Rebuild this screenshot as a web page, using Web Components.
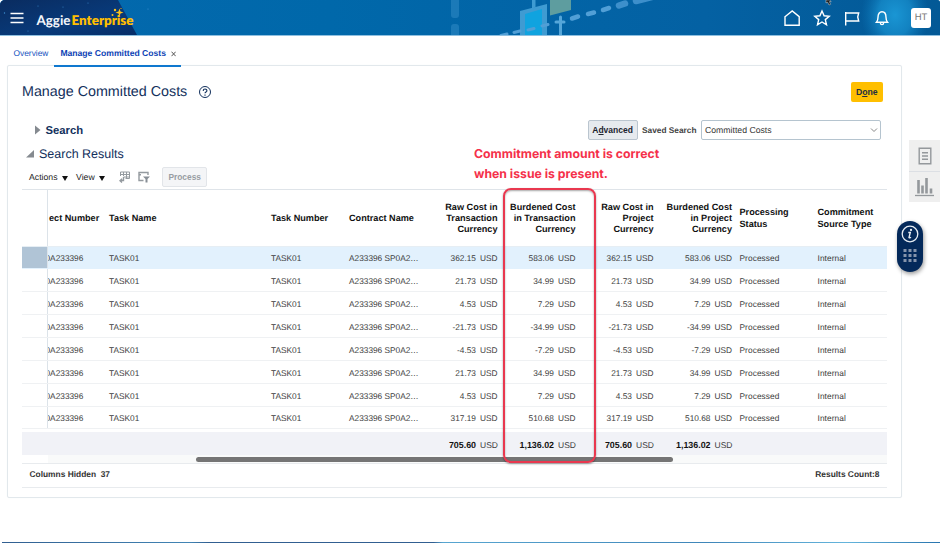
<!DOCTYPE html>
<html lang="en">
<head>
<meta charset="utf-8">
<title>Manage Committed Costs</title>
<style>
    html, body {
        margin: 0;
        height: 546px;
        overflow: hidden;
        background: #fff;
    }

    body {
        font-family: "Liberation Sans", Arial, sans-serif;
        font-size: 8.3px;
        color: #333;
        text-rendering: geometricPrecision;
    }
</style>
</head>
<body>
<erp-app></erp-app>

<script>
class BaseElement extends HTMLElement {
    constructor () {
        super();
        const template = document.createElement('template');
        template.innerHTML = this.markup();
        this._shadowRoot = this.attachShadow({ mode: 'open' });
        this._shadowRoot.appendChild(template.content.cloneNode(true));
    }
}

class AppHeader extends BaseElement {
    markup () {
        return `
<style>
    :host {
        display: block;
        position: relative;
        height: 35px;
        border-bottom: 1px solid #8fc0e0;
        border-radius: 5px 3px 0 0;
        overflow: hidden;
        background: #0267ab;
    }

    .art {
        position: absolute;
        inset: 0;
        display: block;
    }

    .bar {
        position: relative;
        display: flex;
        align-items: center;
        height: 35px;
        padding: 0 9px 0 10px;
        box-sizing: border-box;
    }

    .brand {
        margin: 5px 0 0 12.500px;
        font: 700 13.400px/16px Lato, sans-serif;
        color: #f4f7fb;
        white-space: nowrap;
    }

    .brand b {
        margin-left: 1px;
        color: #ffbf00;
        font-weight: 800;
    }

    .icons {
        display: flex;
        align-items: center;
        gap: 12px;
        margin-left: auto;
        padding-top: 1px;
    }

    .avatar {
        width: 20px;
        height: 20px;
        margin-left: 8px;
        border-radius: 3px;
        background: #fff;
        color: #777;
        font-size: 9.5px;
        line-height: 20px;
        text-align: center;
    }
</style>
<svg class="art" width="940" height="35">
    <defs>
        <linearGradient id="sky" x1="0" x2="1" y1="0" y2="0">
            <stop offset="0" stop-color="#0469ae"/>
            <stop offset=".35" stop-color="#0068aa"/>
            <stop offset=".75" stop-color="#0461a3"/>
            <stop offset="1" stop-color="#035996"/>
        </linearGradient>
        <linearGradient id="night" x1="0" x2="1" y1="0" y2="1">
            <stop offset="0" stop-color="#0a2c60"/>
            <stop offset=".6" stop-color="#083a7a"/>
            <stop offset="1" stop-color="#062d68"/>
        </linearGradient>
        <radialGradient id="glow">
            <stop offset="0" stop-color="#1a96d4"/>
            <stop offset=".5" stop-color="#178fce" stop-opacity=".75"/>
            <stop offset="1" stop-color="#0b78ba" stop-opacity="0"/>
        </radialGradient>
    </defs>
    <rect width="940" height="35" fill="url(#sky)"/>
    <path d="M0 0H118L137 35H0z" fill="url(#night)"/>
    <g fill="#3d8fd1">
        <circle cx="4.500" cy="13" r=".7"/><circle cx="38" cy="6" r=".5"/><circle cx="63" cy="7" r=".5"/>
        <circle cx="88" cy="3" r=".5"/><circle cx="28" cy="31" r=".5"/><circle cx="148" cy="9" r=".6"/>
    </g>
    <ellipse cx="895" cy="15" rx="34" ry="42" fill="url(#glow)"/>
    <g fill="#4ba0d8" opacity=".35">
        <rect x="451" y="-4" width="8" height="22" rx="3"/>
        <rect x="451" y="24" width="8" height="14" rx="3"/>
    </g>
    <path d="M520 11L547 4V35H520z" fill="#3f9bd2"/>
    <path d="M525 14L542 9V35H525z" fill="#10a3df"/>
    <path d="M532 0h3.500v7.500l-3.500 1z" fill="#3f9bd2"/>
    <path d="M550 0H571V10L550 15.500z" fill="#5e9d9f"/>
    <path d="M560.500 17V35M556 22h8" stroke="#55a6d9" stroke-width="3" stroke-linecap="round"/>
    <path d="M501 35.500l6-1.500M514 32.500l6-1.500M528 30l6-1.500M542 26l6-1.500" stroke="#519fd6" stroke-width="3" stroke-linecap="round"/>
    <path d="M572 18.500l6-2M588 14l6-1.500M603 10l6-2" stroke="#519fd6" stroke-width="4.500" stroke-linecap="round"/>
    <path d="M619 5.500l6-2M636 1l20-5" stroke="#3d8fcb" stroke-width="6.500" stroke-linecap="round"/>
    <g fill="#ffc21a">
        <path d="M119.500 8.500l1 3 3 1-3 1-1 3-1-3-3-1 3-1z"/>
        <circle cx="115" cy="10" r="1.200"/><circle cx="112.500" cy="15" r="1"/><circle cx="121" cy="8.500" r=".6"/>
    </g>
    <path d="M826 0v3l1.600-1 1.400 3 1.600-.700-1.300-2.700h2L829.500 0z" fill="#111" stroke="#ddd" stroke-width=".5"/>
</svg>
<div class="bar">
    <svg width="14" height="12" stroke="#fff" stroke-width="1.500"><path d="M.5 1.500h13M.5 6h13M.5 10.500h13"/></svg>
    <div class="brand">Aggie<b>Enterprise</b></div>
    <div class="icons">
        <svg width="18" height="18" fill="none" stroke="#fff" stroke-width="1.400"><path d="M2 7.700L9.200 2l7 5.700V16.200H2z"/></svg>
        <svg width="18" height="18" fill="none" stroke="#fff" stroke-width="1.400"><path d="M9 2l2.100 4.800 5.100.400-3.900 3.400 1.200 5.200L9 13l-4.500 2.800 1.200-5.200L1.800 7.200l5.100-.400z"/></svg>
        <svg width="18" height="18" fill="none" stroke="#fff" stroke-width="1.400"><path d="M2.700 16.500V3M2.700 4h13l-1 4 1 4h-13"/></svg>
        <svg width="18" height="18" fill="none" stroke="#fff" stroke-width="1.400"><path d="M3.500 13.300c1.200-1.300 1.500-2.600 1.500-5C5 4.800 6.600 2.800 9 2.800s4 2 4 5.500c0 2.400.3 3.700 1.500 5zM7.300 13.700c.2 2.500 3.200 2.500 3.400 0"/></svg>
        <div class="avatar">HT</div>
    </div>
</div>`;
    }
}

class PageTabs extends BaseElement {
    markup () {
        return `
<style>
    :host {
        display: flex;
        height: 29px;
        padding-left: 13.500px;
        line-height: 35px;
        color: #1553c0;
        font-size: 8.400px;
        white-space: nowrap;
    }

    .active {
        position: relative;
        z-index: 1;
        display: flex;
        gap: 5.500px;
        height: 28.500px;
        margin-left: 6px;
        padding: 0 5px 0 6px;
        border-bottom: 2px solid #0f78cf;
        color: #0d43b5;
        font-size: 8.600px;
        font-weight: 700;
    }

    svg {
        margin-top: 14.500px;
    }
</style>
<span>Overview</span>
<div class="active"><span>Manage Committed Costs</span><svg width="5" height="6" stroke="#555" stroke-width="1"><path d="M.5.7l4.200 4.500M4.700.7L.5 5.200"/></svg></div>`;
    }
}

class SearchBar extends BaseElement {
    markup () {
        return `
<style>
    :host {
        display: flex;
        align-items: center;
        height: 24px;
        padding: 0 6px 0 13px;
        white-space: nowrap;
    }

    h2 {
        margin: 1px 0 0 4.500px;
        font-size: 11.300px;
        color: #12305c;
    }

    button {
        box-sizing: border-box;
        width: 50px;
        height: 20px;
        margin-left: auto;
        padding: 0;
        border: 1px solid #bac5cf;
        border-radius: 2px;
        background: #e6eaee;
        font: 700 8.500px "Liberation Sans", sans-serif;
        color: #1b2430;
    }

    label {
        margin: 0 4.500px 0 4.500px;
        font-weight: 700;
        color: #444;
    }

    .select {
        display: flex;
        align-items: center;
        justify-content: space-between;
        box-sizing: border-box;
        width: 180px;
        height: 20px;
        padding: 0 2px 0 3px;
        border: 1px solid #b5c4cf;
        border-radius: 2px;
        font-size: 8.700px;
        color: #333;
    }
</style>
<svg width="6" height="10"><path d="M0 .5L5.500 5L0 9.500z" fill="#858a90"/></svg>
<h2>Search</h2>
<button>A<u>d</u>vanced</button>
<label>Saved Search</label>
<div class="select"><span>Committed Costs</span><svg width="8" height="6" fill="none" stroke="#888"><path d="M1 1.500l3 3 3-3"/></svg></div>`;
    }
}

class ResultsToolbar extends BaseElement {
    markup () {
        return `
<style>
    :host {
        display: flex;
        align-items: center;
        height: 24px;
        padding-left: 7px;
        font-size: 8.700px;
        color: #222;
        white-space: nowrap;
    }

    .arrow {
        margin: 2px 8px 0 4.500px;
    }

    .icon {
        margin-right: 8px;
    }

    button {
        box-sizing: border-box;
        width: 45px;
        height: 20px;
        margin-left: 4px;
        padding: 0;
        border: 1px solid #e2e5e9;
        border-radius: 2px;
        background: #f4f5f7;
        font: 700 8.400px "Liberation Sans", sans-serif;
        color: #989da3;
    }
</style>
<span>Actions</span>
<svg class="arrow" width="6" height="5"><path d="M0 0h6L3 5z" fill="#111"/></svg>
<span>View</span>
<svg class="arrow" width="6" height="5"><path d="M0 0h6L3 5z" fill="#111"/></svg>
<svg class="icon" style="margin-left:6px" width="11" height="12" fill="none" stroke="#949a9f">
    <path d="M1.500 5V1h9v6.500h-4M1.500 3.500h9M4.500 1v4M7.500 1v6.500M4.500 6h6"/><path d="M4.500 6v3.500H1.500M3 7.800L1 9.700l2 1.800" stroke-width="1.400"/>
</svg>
<svg class="icon" width="12" height="12" fill="none" stroke="#949a9f" stroke-width="1.400">
    <path d="M5.500 9.500H1V1.500h9V4M1 3.800h2"/><path d="M5 5.500h7L9.500 8v3.500h-2V8z" fill="#878e95" stroke="none"/>
</svg>
<button>Process</button>`;
    }
}

class ResultsTable extends BaseElement {
    markup () {
        const amounts = [
            ['362.15', '583.06'],
            ['21.73', '34.99'],
            ['4.53', '7.29'],
            ['-21.73', '-34.99'],
            ['-4.53', '-7.29'],
            ['21.73', '34.99'],
            ['4.53', '7.29'],
            ['317.19', '510.68']
        ];
        const cost = value => `<span class="num">${value}<i>USD</i></span>`;
        const rows = amounts.map(([raw, burdened], index) => `
<div class="row${index === 0 ? ' selected' : ''}">
    <span class="frozen"></span><span class="clip">0A233396</span><span>TASK01</span><span>TASK01</span>
    <span>A233396 SP0A2…</span>${cost(raw)}${cost(burdened)}${cost(raw)}${cost(burdened)}
    <span class="status">Processed</span><span class="status">Internal</span>
</div>`).join('');

        return `
<style>
    :host {
        display: block;
        border-top: 1px solid #dfe4e9;
        font-size: 8.300px;
        color: #3c3c3c;
    }

    .row {
        display: grid;
        grid-template-columns: 26px 57px 162px 78px 78px 78px 78px 78px 78.500px 78px 73.500px;
        align-items: center;
        box-sizing: border-box;
        height: 22.860px;
        border-bottom: 1px solid #eff1f3;
        white-space: nowrap;
    }

    .row > span {
        padding: 2px 4px 0;
    }

    .row > .frozen {
        align-self: stretch;
        padding: 0;
        border-right: 1px solid #dce3e9;
        background: #fff;
    }

    .row > .clip {
        padding: 2px 0 0;
        overflow: hidden;
        text-indent: -2.500px;
    }

    .row > .num {
        padding-right: 3.500px;
        text-align: right;
    }

    i {
        margin-left: 4px;
        font-style: normal;
    }

    .status {
        letter-spacing: .08px;
    }

    .head {
        height: 56.500px;
        border-bottom-color: #e6eef4;
        font-size: 9.150px;
        font-weight: 700;
        line-height: 11.300px;
        color: #111;
    }

    .head > .clip {
        text-indent: 1px;
    }

    .selected {
        background: #e2f1fd;
        border-bottom-color: #e2f1fd;
    }

    .row.selected > .frozen {
        background: #b0c4d6;
    }

    .totals {
        height: 22.500px;
        margin-top: 3px;
        border: 0;
        background: #f1f2f7;
        font-size: 8.500px;
    }

    .totals > .num {
        padding-right: 3px;
    }

    .totals b {
        color: #111;
        font-size: 8.900px;
    }

    .track {
        box-sizing: border-box;
        height: 8px;
        margin-left: 26px;
        padding: 1px 0 0 147.500px;
        display: flex;
        align-items: center;
        background: #f9fafa;
    }

    .thumb {
        width: 477.500px;
        height: 4.500px;
        border-radius: 3px;
        background: #757575;
    }
</style>
<div class="row head">
    <span class="frozen"></span><span class="clip">ect Number</span><span>Task Name</span><span>Task Number</span>
    <span>Contract Name</span><span class="num">Raw Cost in<br>Transaction<br>Currency</span>
    <span class="num">Burdened Cost<br>in Transaction<br>Currency</span><span class="num">Raw Cost in<br>Project<br>Currency</span>
    <span class="num">Burdened Cost<br>in Project<br>Currency</span><span>Processing<br>Status</span><span>Commitment<br>Source Type</span>
</div>
${rows}
<div class="row totals">
    <span></span><span></span><span></span><span></span><span></span>
    ${cost('<b>705.60</b>')}${cost('<b>1,136.02</b>')}${cost('<b>705.60</b>')}${cost('<b>1,136.02</b>')}
    <span></span><span></span>
</div>
<div class="track"><div class="thumb"></div></div>`;
    }
}

// Red callout drawn over the table, with its caption above the frame
class CalloutNote extends BaseElement {
    markup () {
        return `
<style>
    :host {
        display: block;
        position: absolute;
        left: 466px;
        top: 77.500px;
        width: 200px;
        color: #f5304a;
        font: 700 12.250px/20.300px Inter, sans-serif;
        white-space: nowrap;
        pointer-events: none;
    }

    .frame {
        box-sizing: border-box;
        width: 93px;
        height: 275px;
        margin: 4px 0 0 29px;
        border: 2px solid #e9384f;
        border-radius: 8px;
        box-shadow: 0 1px 2px rgba(0, 0, 0, .4), inset 0 1px 2px rgba(0, 0, 0, .35);
    }
</style>
<slot></slot>
<div class="frame"></div>`;
    }
}

class PagePanel extends BaseElement {
    markup () {
        return `
<style>
    :host {
        display: block;
        position: relative;
        box-sizing: border-box;
        width: 895px;
        height: 433px;
        margin-left: 7px;
        padding: 0 14px;
        border: 1px solid #e2e8ec;
        border-radius: 2px;
        box-shadow: 0 0 1px #e8edf0;
    }

    header {
        display: flex;
        align-items: center;
        height: 52px;
        padding-right: 4px;
        color: #12305c;
    }

    h1 {
        margin: 0 12px 0 0;
        font-size: 14.300px;
        font-weight: 400;
        color: #12305c;
    }

    header button {
        width: 32.500px;
        height: 20px;
        margin-left: auto;
        padding: 0;
        border: 0;
        border-radius: 2px;
        background: #ffbf00;
        font: 700 8.700px "Liberation Sans", sans-serif;
        color: #222e40;
    }

    h2 {
        display: flex;
        align-items: center;
        gap: 5px;
        height: 23px;
        margin: 0 0 0 4px;
        font-size: 12.500px;
        font-weight: 400;
        color: #12305c;
    }

    footer {
        display: flex;
        justify-content: space-between;
        height: 23.500px;
        padding: 0 7.500px;
        border: solid #e8ebee;
        border-width: 1px 0;
        font-size: 8.400px;
        font-weight: 700;
        line-height: 21px;
        white-space: pre;
    }
</style>
<header>
    <h1>Manage Committed Costs</h1>
    <svg width="12" height="12" fill="none" stroke="#12305c"><circle cx="6" cy="6" r="5.500"/><path d="M4.200 4.900c0-2.500 3.700-2.400 3.700-.200C7.900 6 6 6 6 7.300M6 8.500v1.200" stroke-width="1.100"/></svg>
    <button>D<u>o</u>ne</button>
</header>
<search-bar></search-bar>
<h2><svg width="8" height="8"><path d="M8 0V7.500H0z" fill="#858a90"/></svg>Search Results</h2>
<results-toolbar></results-toolbar>
<results-table></results-table>
<footer><span>Columns Hidden  37</span><span>Results Count:8</span></footer>
<callout-note>Commitment amount is correct<br>when issue is present.</callout-note>`;
    }
}

// Drawer tabs and the guide widget that float at the right edge
class SideRail extends BaseElement {
    markup () {
        return `
<style>
    :host {
        display: block;
        position: absolute;
        top: 140px;
        right: 0;
        width: 43px;
    }

    .tab {
        display: flex;
        align-items: center;
        justify-content: center;
        box-sizing: border-box;
        width: 31px;
        height: 31px;
        margin-left: auto;
        background: #efefef;
    }

    .tab + .tab {
        border-top: 1px solid #dcdfe4;
    }

    .guide {
        display: flex;
        flex-direction: column;
        align-items: center;
        gap: 5px;
        box-sizing: border-box;
        width: 26px;
        height: 51px;
        margin-top: 18.500px;
        padding-top: 4px;
        border-radius: 13px;
        background: #04295a;
        box-shadow: 1px 2px 4px rgba(0, 0, 0, .4);
    }
</style>
<div class="tab"><svg width="14" height="18" fill="none" stroke="#94989c" stroke-width="1.400"><path d="M1.200 1.200h11.600v15.600H1.200zM4 5.700h6M4 9h6M4 12.300h6"/></svg></div>
<div class="tab"><svg width="19" height="20" fill="none" stroke="#94989c" stroke-width="2.600"><path d="M3.500 3v13.500M7.500 8.500v8M11.500 1v15.500M16 11.500v5"/><path d="M0 18.500h19" stroke-width="1.300"/></svg></div>
<div class="guide">
    <svg width="18" height="18" fill="none" stroke="#e8edf3" stroke-width="1.300"><circle cx="9" cy="9" r="7.800"/><path d="M7.300 7.500h2L8 12.500c.6.700 1.400.2 1.900-.4" stroke-width="1.400"/><circle cx="10" cy="4.900" r=".5" fill="#fff"/></svg>
    <svg width="14" height="15" fill="#8594ab"><path d="M.5 1h3v3h-3zM5.500 1h3v3h-3zM10.500 1h3v3h-3zM.5 6h3v3h-3zM5.500 6h3v3h-3zM10.500 6h3v3h-3zM.5 11h3v3h-3zM5.500 11h3v3h-3zM10.500 11h3v3h-3z"/></svg>
</div>`;
    }
}

class ErpApp extends BaseElement {
    markup () {
        return `
<style>
    :host {
        display: flex;
        flex-direction: column;
        position: relative;
        width: 940px;
        height: 543px;
    }

    .strip {
        height: 1.500px;
        margin: auto 0 0 2px;
        background: linear-gradient(90deg, #315f91, #4285b5 20%, #315f91 22% 46%, #58a6d1 47%, #3f86b9 75%, #65b5dc 90%, #2874ae);
    }
</style>
<app-header></app-header>
<page-tabs></page-tabs>
<page-panel></page-panel>
<side-rail></side-rail>
<div class="strip"></div>`;
    }
}

customElements.define('app-header', AppHeader);
customElements.define('page-tabs', PageTabs);
customElements.define('search-bar', SearchBar);
customElements.define('results-toolbar', ResultsToolbar);
customElements.define('results-table', ResultsTable);
customElements.define('callout-note', CalloutNote);
customElements.define('page-panel', PagePanel);
customElements.define('side-rail', SideRail);
customElements.define('erp-app', ErpApp);
</script>
</body>
</html>
